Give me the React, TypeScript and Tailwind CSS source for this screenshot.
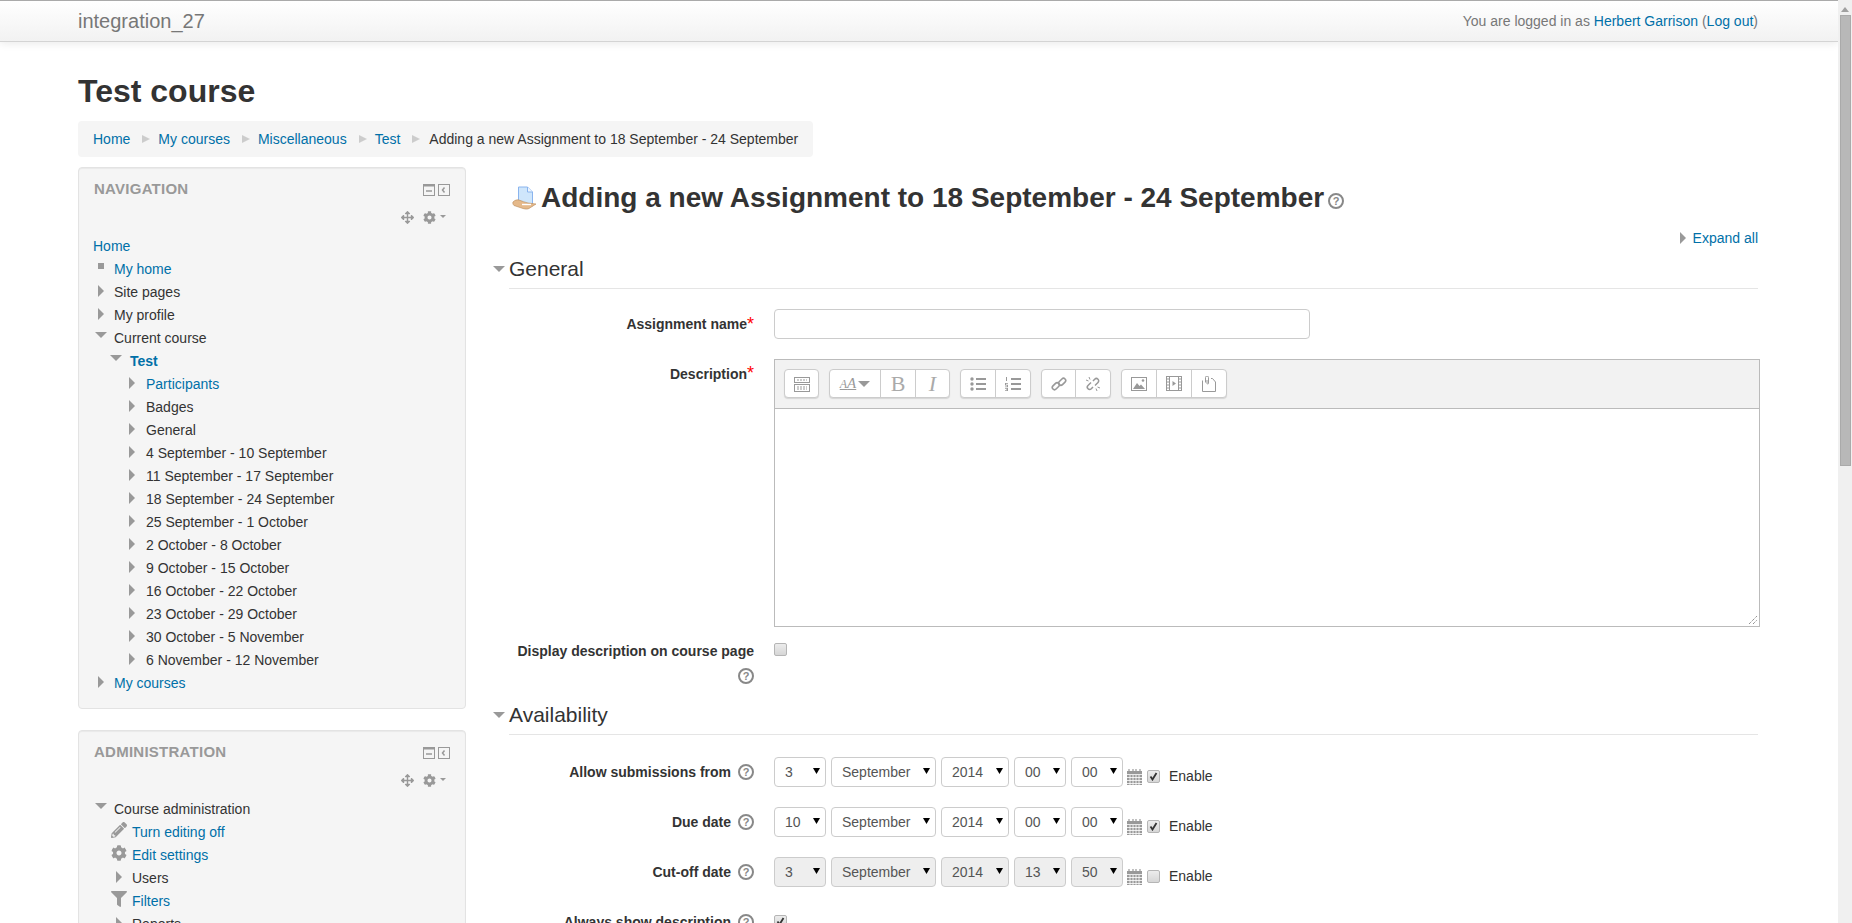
import { FaPencilAlt, FaCog, FaFilter, FaArrowsAlt } from 'react-icons/fa';

type Row = { text: string; level: 0 | 1 | 2 | 3 | 4; icon?: 'closed' | 'open' | 'square' | 'pencil' | 'gear' | 'filter'; link?: boolean; bold?: boolean };

const navRows: Row[] = [
  { text: 'Home', level: 0, link: true },
  { text: 'My home', level: 1, icon: 'square', link: true },
  { text: 'Site pages', level: 1, icon: 'closed' },
  { text: 'My profile', level: 1, icon: 'closed' },
  { text: 'Current course', level: 1, icon: 'open' },
  { text: 'Test', level: 2, icon: 'open', link: true, bold: true },
  { text: 'Participants', level: 3, icon: 'closed', link: true },
  { text: 'Badges', level: 3, icon: 'closed' },
  { text: 'General', level: 3, icon: 'closed' },
  { text: '4 September - 10 September', level: 3, icon: 'closed' },
  { text: '11 September - 17 September', level: 3, icon: 'closed' },
  { text: '18 September - 24 September', level: 3, icon: 'closed' },
  { text: '25 September - 1 October', level: 3, icon: 'closed' },
  { text: '2 October - 8 October', level: 3, icon: 'closed' },
  { text: '9 October - 15 October', level: 3, icon: 'closed' },
  { text: '16 October - 22 October', level: 3, icon: 'closed' },
  { text: '23 October - 29 October', level: 3, icon: 'closed' },
  { text: '30 October - 5 November', level: 3, icon: 'closed' },
  { text: '6 November - 12 November', level: 3, icon: 'closed' },
  { text: 'My courses', level: 1, icon: 'closed', link: true },
];

const adminRows: Row[] = [
  { text: 'Course administration', level: 1, icon: 'open' },
  { text: 'Turn editing off', level: 4, icon: 'pencil', link: true },
  { text: 'Edit settings', level: 4, icon: 'gear', link: true },
  { text: 'Users', level: 4, icon: 'closed' },
  { text: 'Filters', level: 4, icon: 'filter', link: true },
  { text: 'Reports', level: 4, icon: 'closed' },
];

const indent = { 0: 'w-0', 1: 'w-[21px] pl-[1px]', 2: 'w-[37px] pl-[16px]', 3: 'w-[53px] pl-[32px]', 4: 'w-[39px] pl-[18px]' };

function ClosedArrow() {
  return (
    <svg width="6" height="12" viewBox="0 0 6 12" className="fill-[#999]">
      <path d="M0 0l6 6-6 6z" />
    </svg>
  );
}

function OpenArrow() {
  return (
    <svg width="12" height="6" viewBox="0 0 12 6" className="fill-[#999]">
      <path d="M0 0h12L6 6z" />
    </svg>
  );
}

function RowIcon({ icon, level }: { icon: Row['icon']; level: Row['level'] }) {
  if (icon === 'closed') return <div className={level === 4 ? 'mt-[4px] ml-[5px]' : 'mt-[4px] ml-[4px]'}><ClosedArrow /></div>;
  if (icon === 'open') return <div className="mt-[5px] ml-[1px]"><OpenArrow /></div>;
  if (icon === 'square') return <div className="mt-[5px] ml-[4px] h-[6px] w-[6px] bg-[#999]" />;
  if (icon === 'pencil') return <FaPencilAlt className="mt-[1px] text-[16px] text-[#999]" />;
  if (icon === 'gear') return <FaCog className="mt-[1px] text-[16px] text-[#999]" />;
  if (icon === 'filter') return <FaFilter className="mt-[1px] text-[16px] text-[#999]" />;
  return null;
}

function Tree({ rows }: { rows: Row[] }) {
  return (
    <div className="-ml-px">
      {rows.map((r) => (
        <div key={r.text} className="flex h-[23px] leading-[23px]">
          <div className={`shrink-0 ${indent[r.level]}`}>
            <RowIcon icon={r.icon} level={r.level} />
          </div>
          <span className={`${r.link ? 'text-[#0070a8]' : 'text-[#333]'} ${r.bold ? 'font-bold' : ''}`}>{r.text}</span>
        </div>
      ))}
    </div>
  );
}

function Block({ title, rows }: { title: string; rows: Row[] }) {
  return (
    <section className="mb-[21px] rounded border border-[#e3e3e3] bg-[#f5f5f5] pb-[13px] pl-[15px] pr-[15px] shadow-[inset_0_1px_1px_rgba(0,0,0,0.05)]">
      <div className="flex h-[43px] items-start justify-between">
        <h2 className="mt-[11px] text-[15px] leading-[20px] font-bold tracking-[0.25px] text-[#999] uppercase">{title}</h2>
        <div className="mt-[16px] flex gap-[3px]">
          <svg width="12" height="12" viewBox="0 0 12 12" className="fill-none stroke-[#999]">
            <rect x="0.5" y="0.5" width="11" height="11" />
            <rect x="0" y="0" width="12" height="2" className="fill-[#999]" />
            <path d="M3 7h6" strokeWidth="1.5" />
          </svg>
          <svg width="12" height="12" viewBox="0 0 12 12" className="fill-none stroke-[#999]">
            <rect x="0.5" y="0.5" width="11" height="11" />
            <path d="M6.500 3.500L4.500 6l2 2.500" strokeWidth="1.500" />
          </svg>
        </div>
      </div>
      <div className="flex h-[24px] items-start justify-end pr-[4px] text-[#999]">
        <FaArrowsAlt className="mr-[9px] text-[13px]" />
        <FaCog className="text-[13px]" />
        <svg width="6" height="3" viewBox="0 0 6 3" className="mt-[4px] ml-[4px] fill-[#999]">
          <path d="M0 0h6L3 3z" />
        </svg>
      </div>
      <Tree rows={rows} />
    </section>
  );
}

function Help() {
  return (
    <span className="inline-flex h-[16px] w-[16px] shrink-0 items-center justify-center rounded-full border-2 border-[#888] bg-white text-[11px] leading-none font-bold text-[#888]">?</span>
  );
}

function Checkbox({ checked, className }: { checked?: boolean; className?: string }) {
  return (
    <span className={`flex h-[13px] w-[13px] shrink-0 items-center justify-center rounded-[2px] border border-[#b5b5b5] bg-gradient-to-b from-[#ececec] to-[#d6d6d6] ${className ?? ''}`}>
      {checked && (
        <svg width="9" height="9" viewBox="0 0 9 9" className="fill-none stroke-[#333]" strokeWidth="1.800">
          <path d="M1.500 4.500l2 3 4-6.500" />
        </svg>
      )}
    </span>
  );
}

function Select({ value, width, off }: { value: string; width: string; off?: boolean }) {
  return (
    <div className={`relative h-[30px] shrink-0 ${width}`}>
      <select
        defaultValue={value}
        className={`h-full w-full appearance-none rounded border border-[#ccc] pl-[10px] text-[14px] text-[#555] ${off ? 'bg-[#eee]' : 'bg-white'}`}
      >
        <option>{value}</option>
      </select>
      <svg width="7" height="6" viewBox="0 0 7 6" className="pointer-events-none absolute top-[11px] right-[6px] fill-black">
        <path d="M0 0h7L3.500 6z" />
      </svg>
    </div>
  );
}

function Calendar() {
  return (
    <svg width="15" height="16" viewBox="0 0 15 16" className="mt-[12px] ml-[4px] shrink-0">
      <rect x="0" y="2" width="15" height="14" fill="#999" />
      <path d="M2 0v3M6 0v3M9 0v3M13 0v3" stroke="#999" strokeWidth="1.200" />
      <path d="M0 5.500h15M3 6v10M6 6v10M9 6v10M12 6v10M0 8.500h15M0 11.500h15M0 14.500h15" stroke="#fff" strokeWidth="0.800" />
    </svg>
  );
}

function DateRow({ label, day, hour, min, checked, off }: { label: string; day: string; hour: string; min: string; checked?: boolean; off?: boolean }) {
  return (
    <div className="mb-[20px] flex h-[30px] pl-[19px]">
      <div className="flex w-[245px] shrink-0 items-center justify-end gap-[7px] font-bold text-[#333]">
        {label}
        <Help />
      </div>
      <div className="ml-[20px] flex gap-[5px]">
        <Select value={day} width="w-[52px]" off={off} />
        <Select value="September" width="w-[105px]" off={off} />
        <Select value="2014" width="w-[68px]" off={off} />
        <Select value={hour} width="w-[52px]" off={off} />
        <Select value={min} width="w-[52px]" off={off} />
      </div>
      <Calendar />
      <Checkbox checked={checked} className="mt-[13px] ml-[5px]" />
      <span className="mt-[8px] ml-[9px] leading-[23px] text-[#333]">Enable</span>
    </div>
  );
}

function Legend({ title }: { title: string }) {
  return (
    <div className="flex items-start">
      <div className="mt-[13px] w-[19px] pl-[3px]">
        <OpenArrow />
      </div>
      <h3 className="h-[36px] flex-1 border-b border-[#e5e5e5] text-[21px] leading-[31px] text-[#333]">{title}</h3>
    </div>
  );
}

function ToolButton({ width, children }: { width: string; children: React.ReactNode }) {
  return <div className={`flex h-full items-center justify-center border-r border-[#ccc] last:border-r-0 ${width}`}>{children}</div>;
}

function ToolGroup({ children }: { children: React.ReactNode }) {
  return <div className="flex h-[29px] rounded border border-[#ccc] bg-white shadow-[0_1px_1px_rgba(0,0,0,0.12)]">{children}</div>;
}

function Toolbar() {
  return (
    <div className="flex h-[49px] items-start gap-[10px] border-b border-[#bbb] bg-[#f2f2f2] pt-[9px] pl-[9px]">
      <ToolGroup>
        <ToolButton width="w-[33px]">
          <svg width="16" height="16" viewBox="0 0 16 16" className="fill-none stroke-[#999]">
            <rect x="0.500" y="1.500" width="15" height="5" />
            <rect x="0.500" y="8.500" width="15" height="7" />
            <path d="M3 4h10M3 11h10M3 13h10" strokeDasharray="2 1" />
          </svg>
        </ToolButton>
      </ToolGroup>
      <ToolGroup>
        <ToolButton width="w-[51px]">
          <span className="font-['Liberation_Serif',serif] text-[12px] leading-none text-[#999] italic underline">A<span className="text-[15px]">A</span></span>
          <svg width="12" height="6" viewBox="0 0 12 6" className="ml-[2px] fill-[#999]">
            <path d="M0 0h12L6 6z" />
          </svg>
        </ToolButton>
        <ToolButton width="w-[35px]">
          <span className="font-['Liberation_Serif',serif] text-[22px] leading-none text-[#aaa]">B</span>
        </ToolButton>
        <ToolButton width="w-[33px]">
          <span className="font-['Liberation_Serif',serif] text-[22px] leading-none text-[#aaa] italic">I</span>
        </ToolButton>
      </ToolGroup>
      <ToolGroup>
        <ToolButton width="w-[35px]">
          <svg width="16" height="14" viewBox="0 0 16 14" className="fill-[#999]">
            <circle cx="2" cy="2" r="1.700" />
            <circle cx="2" cy="7" r="1.700" />
            <circle cx="2" cy="12" r="1.700" />
            <path d="M6 1h10v2H6zM6 6h10v2H6zM6 11h10v2H6z" />
          </svg>
        </ToolButton>
        <ToolButton width="w-[34px]">
          <svg width="16" height="14" viewBox="0 0 16 14" className="fill-[#999]">
            <path d="M1 0h1v4H1zM0 6h3v.7H1v1h2v2.600H0v-.7h2v-1H0zM0 11h3v3H0v-.7h2v-.5H1v-.6h1v-.5H0z" />
            <path d="M6 1h10v2H6zM6 6h10v2H6zM6 11h10v2H6z" />
          </svg>
        </ToolButton>
      </ToolGroup>
      <ToolGroup>
        <ToolButton width="w-[34px]">
          <svg width="16" height="16" viewBox="0 0 16 16" className="fill-none stroke-[#999]" strokeWidth="1.600">
            <rect x="0.800" y="8" width="8" height="4.400" rx="2.200" transform="rotate(-45 4.800 10.200)" />
            <rect x="7.200" y="3.600" width="8" height="4.400" rx="2.200" transform="rotate(-45 11.200 5.800)" />
          </svg>
        </ToolButton>
        <ToolButton width="w-[34px]">
          <svg width="16" height="16" viewBox="0 0 16 16" className="fill-none stroke-[#999]" strokeWidth="1.500">
            <path d="M6 6.500L3 9.500a2.300 2.300 0 0 0 3.300 3.300L8 11M10 9.500l3-3A2.300 2.300 0 0 0 9.700 3.200L8 5" />
            <path d="M1 4l2.500 1M4 1l1 2.500M15 12l-2.500-1M12 15l-1-2.500" strokeWidth="1" />
          </svg>
        </ToolButton>
      </ToolGroup>
      <ToolGroup>
        <ToolButton width="w-[35px]">
          <svg width="16" height="14" viewBox="0 0 16 14">
            <rect x="0.500" y="0.500" width="15" height="13" fill="none" stroke="#999" />
            <path d="M2 12l4-6 2.500 3 1.500-1.500L14 12z" fill="#999" />
            <circle cx="12" cy="3.500" r="1.300" fill="#999" />
          </svg>
        </ToolButton>
        <ToolButton width="w-[35px]">
          <svg width="16" height="15" viewBox="0 0 16 15">
            <rect x="0.500" y="0.500" width="15" height="14" fill="none" stroke="#999" />
            <path d="M3.500 0v15M12.500 0v15" stroke="#999" />
            <path d="M0 3h3.500M0 6h3.500M0 9h3.500M0 12h3.500M12.500 3H16M12.500 6H16M12.500 9H16M12.500 12H16" stroke="#999" />
            <path d="M6.500 5l3.500 2.500-3.500 2.500z" fill="#999" />
          </svg>
        </ToolButton>
        <ToolButton width="w-[34px]">
          <svg width="14" height="16" viewBox="0 0 14 16" className="fill-none stroke-[#999]">
            <path d="M.5 4.500v11h13V6l-3-3.500H9M3.500 6.500v-5a1.500 1.500 0 0 1 3 0v6a.8.8 0 0 1-1.500 0V4" />
          </svg>
        </ToolButton>
      </ToolGroup>
    </div>
  );
}

function AssignIcon() {
  return (
    <svg width="25" height="25" viewBox="0 0 25 25" className="shrink-0">
      <path d="M6.500 1h9l5 5v14h-14z" fill="#cfe6fb" stroke="#8ab4ee" />
      <path d="M15.500 1v5h5" fill="#eef6fe" stroke="#8ab4ee" />
      <path d="M1 16c2-2 4-2.500 6-2 3 1 6 2.500 9 3l8 1-7 4.500c-2 1-4 .500-6 0l-9-3c-1-1-1.500-2.500-1-3.500z" fill="#e5b98a" stroke="#b98a58" strokeWidth="0.600" />
      <path d="M10 18.500h9" stroke="#fff" strokeWidth="1.400" />
    </svg>
  );
}

function App() {
  return (
    <div className="flex h-[923px] overflow-hidden bg-white font-['Liberation_Sans',Arial,sans-serif] text-[14px] text-[#333]">
      <div className="min-w-0 flex-1">
        <header className="flex h-[42px] items-center justify-between border-t border-b border-t-[#aaa] border-b-[#d4d4d4] bg-gradient-to-b from-white to-[#f2f2f2] px-[78px] pr-[80px] shadow-[0_2px_8px_rgba(0,0,0,0.08)]">
          <a className="text-[20px] text-[#777]">integration_27</a>
          <div className="text-[#777]">
            You are logged in as <a className="text-[#0070a8]">Herbert Garrison</a> (<a className="text-[#0070a8]">Log out</a>)
          </div>
        </header>

        <div className="pr-[80px] pl-[78px]">
          <h1 className="mt-[29px] text-[32px] leading-[40px] font-bold text-[#333]">Test course</h1>
          <nav className="mt-[10px] flex h-[36px] w-fit items-center rounded bg-[#f5f5f5] px-[15px]">
            {['Home', 'My courses', 'Miscellaneous', 'Test'].map((c) => (
              <span key={c} className="flex items-center">
                <a className="text-[#0070a8]">{c}</a>
                <svg width="8" height="8" viewBox="0 0 8 8" className="mr-[8px] ml-[12px] fill-[#ccc]">
                  <path d="M0 0l8 4-8 4z" />
                </svg>
              </span>
            ))}
            <span className="ml-px">Adding a new Assignment to 18 September - 24 September</span>
          </nav>

          <div className="mt-[10px] flex gap-[24px]">
            <aside className="w-[388px] shrink-0">
              <Block title="Navigation" rows={navRows} />
              <Block title="Administration" rows={adminRows} />
            </aside>

            <main className="min-w-0 flex-1">
              <div className="mt-[16px] flex items-center pl-[22px]">
                <AssignIcon />
                <h2 className="ml-[4px] text-[28px] leading-[30px] font-bold text-[#333]">Adding a new Assignment to 18 September - 24 September</h2>
                <span className="mt-[4px] ml-[4px]"><Help /></span>
              </div>
              <div className="mt-[15px] flex items-center justify-end leading-[20px]">
                <ClosedArrow />
                <a className="ml-[7px] text-[#0070a8]">Expand all</a>
              </div>

              <div className="mt-[5px]">
                <Legend title="General" />
              </div>
              <div className="mt-[20px] flex h-[30px] pl-[19px]">
                <div className="flex w-[245px] shrink-0 items-center justify-end font-bold">
                  Assignment name<span className="text-[18px] leading-none font-normal text-[#ff0000]">*</span>
                </div>
                <input type="text" className="ml-[20px] h-[30px] w-[536px] rounded border border-[#ccc] bg-white" />
              </div>
              <div className="mt-[20px] flex pl-[19px]">
                <div className="mt-[5px] w-[245px] shrink-0 text-right font-bold">
                  Description<span className="text-[18px] leading-none font-normal text-[#ff0000]">*</span>
                </div>
                <div className="ml-[20px] w-[986px] shrink-0 border border-[#bbb]">
                  <Toolbar />
                  <div className="relative h-[217px]">
                    <svg width="10" height="10" viewBox="0 0 10 10" className="absolute right-[1px] bottom-[1px] stroke-[#666]">
                      <path d="M1 9l8-8M5 9l4-4" strokeDasharray="1 1" />
                    </svg>
                  </div>
                </div>
              </div>
              <div className="mt-[13px] flex h-[56px] pl-[19px]">
                <div className="w-[245px] shrink-0 text-right leading-[23px] font-bold">
                  Display description on course page
                  <div className="mt-[5px] flex justify-end">
                    <Help />
                  </div>
                </div>
                <Checkbox className="mt-[3px] ml-[20px]" />
              </div>

              <div className="mt-[3px]">
                <Legend title="Availability" />
              </div>
              <div className="mt-[22px]">
                <DateRow label="Allow submissions from" day="3" hour="00" min="00" checked />
                <DateRow label="Due date" day="10" hour="00" min="00" checked />
                <DateRow label="Cut-off date" day="3" hour="13" min="50" off />
                <div className="flex h-[30px] pl-[19px]">
                  <div className="flex w-[245px] shrink-0 items-center justify-end gap-[7px] font-bold">
                    Always show description
                    <Help />
                  </div>
                  <Checkbox checked className="mt-[8px] ml-[20px]" />
                </div>
              </div>
            </main>
          </div>
        </div>
      </div>

      <div className="relative h-full w-[14px] shrink-0 bg-[#f0f0f0]">
        <svg width="8" height="5" viewBox="0 0 8 5" className="absolute top-[7px] left-[3px] fill-[#a0a0a0]">
          <path d="M0 5h8L4 0z" />
        </svg>
        <div className="absolute top-[15px] left-[2px] h-[451px] w-[11px] border border-[#aaa] bg-[#b8b8b8]" />
      </div>
    </div>
  );
}

export default App;
